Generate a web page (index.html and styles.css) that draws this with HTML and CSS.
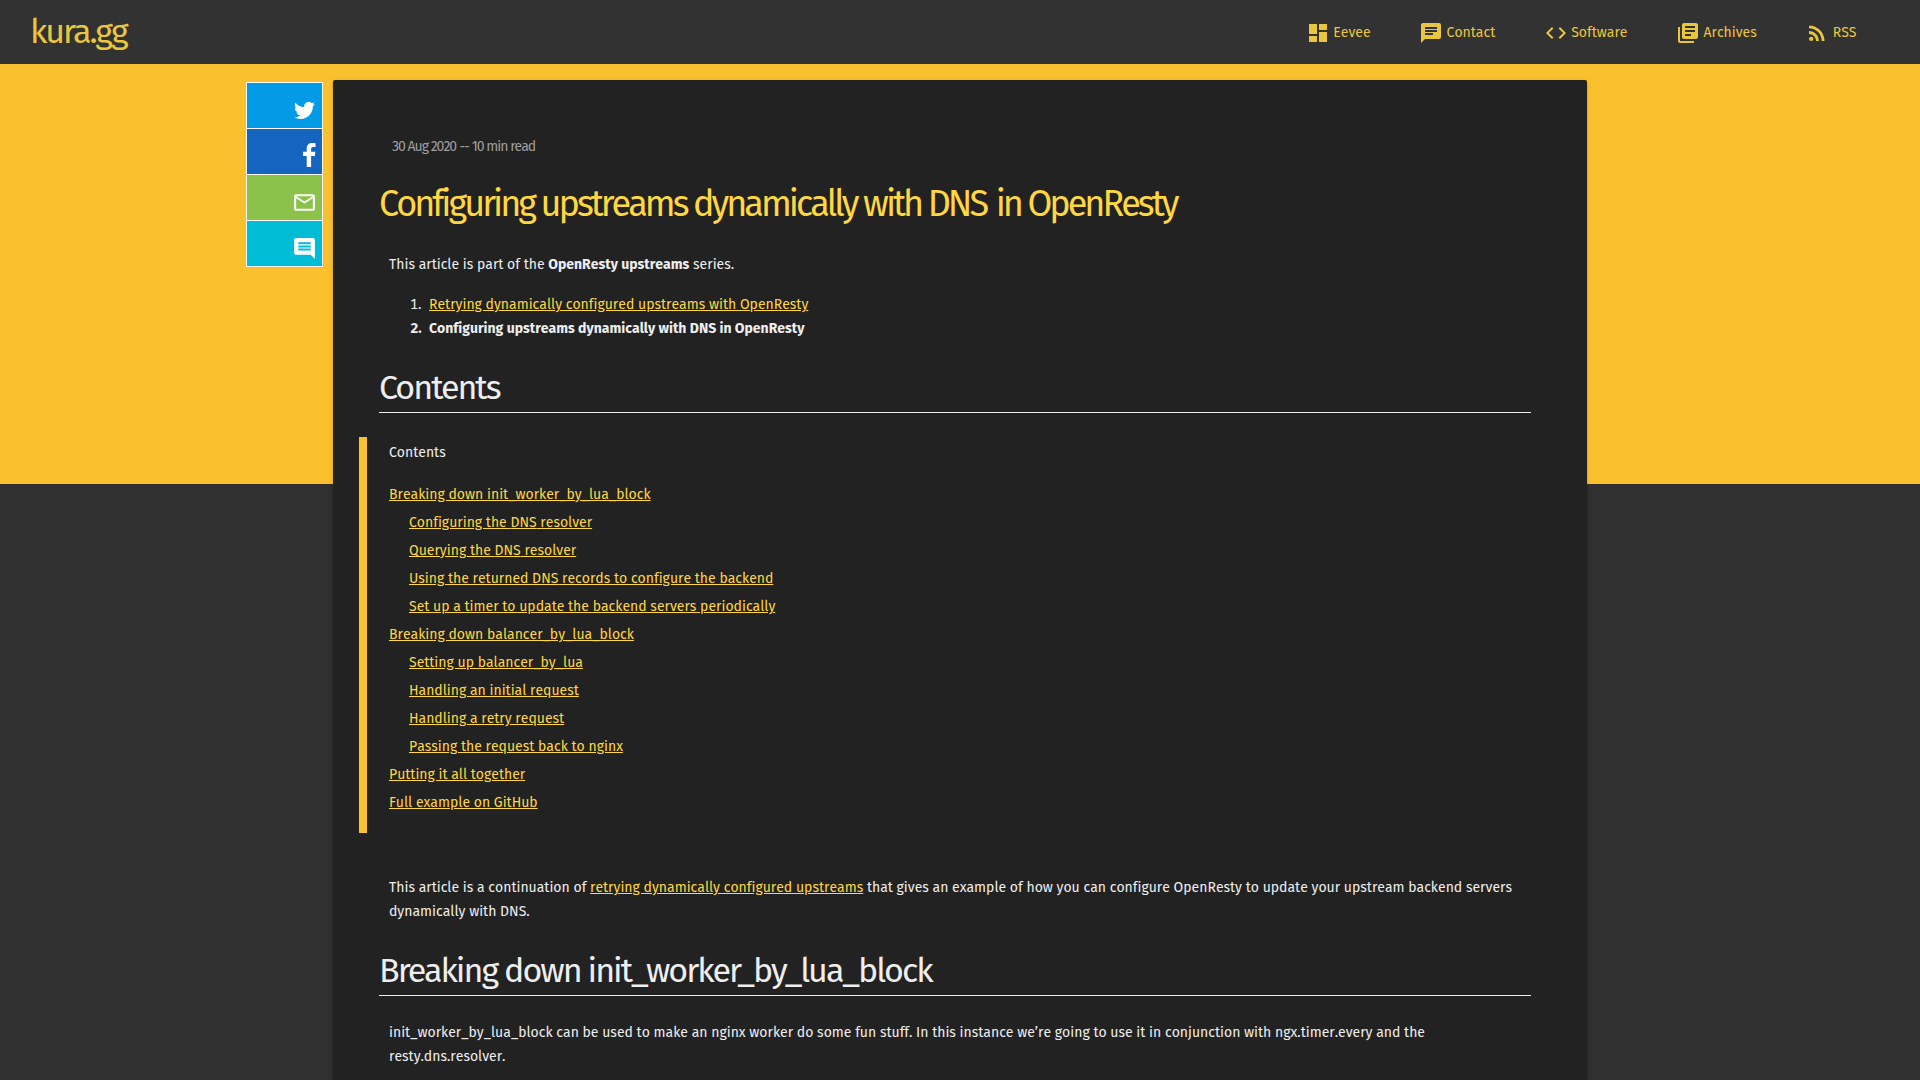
FILE: index.html
```html
<!DOCTYPE html>
<html lang="en">
<head>
<meta charset="utf-8">
<title>Configuring upstreams dynamically with DNS in OpenResty</title>
<link rel="stylesheet" href="styles.css">
</head>
<body>
<header class="site-header">
  <a class="logo" href="#">kura.gg</a>
  <nav class="nav">
    <a href="#"><svg viewBox="0 0 24 24"><path d="M3 13h8V3H3v10zm0 8h8v-6H3v6zm10 0h8V11h-8v10zm0-18v6h8V3h-8z"/></svg>Eevee</a>
    <a href="#"><svg viewBox="0 0 24 24"><path d="M20 2H4c-1.1 0-1.99.9-1.99 2L2 22l4-4h14c1.1 0 2-.9 2-2V4c0-1.100-.9-2-2-2zM6 9h12v2H6V9zm8 5H6v-2h8v2zm4-6H6V6h12v2z"/></svg>Contact</a>
    <a href="#"><svg viewBox="0 0 24 24"><path d="M9.400 16.600L4.800 12l4.600-4.600L8 6l-6 6 6 6 1.400-1.400zm5.200 0l4.600-4.600-4.600-4.600L16 6l6 6-6 6-1.400-1.400z"/></svg>Software</a>
    <a href="#"><svg viewBox="0 0 24 24"><path d="M4 6H2v14c0 1.100.9 2 2 2h14v-2H4V6zm16-4H8c-1.100 0-2 .9-2 2v12c0 1.100.9 2 2 2h12c1.100 0 2-.9 2-2V4c0-1.100-.9-2-2-2zm-1 9H9V9h10v2zm-4 4H9v-2h6v2zm4-8H9V5h10v2z"/></svg>Archives</a>
    <a href="#"><svg viewBox="0 0 24 24"><circle cx="6.180" cy="17.820" r="2.180"/><path d="M4 4.440v2.830c7.030 0 12.730 5.700 12.730 12.730h2.830c0-8.590-6.970-15.560-15.560-15.560zm0 5.660v2.830c3.900 0 7.070 3.170 7.070 7.070h2.830c0-5.470-4.430-9.900-9.900-9.900z"/></svg>RSS</a>
  </nav>
</header>
<div class="page">
  <aside class="share">
    <a class="twitter" href="#" aria-label="Twitter"><svg viewBox="0 0 24 24"><path d="M23.950 4.570a10 10 0 0 1-2.820.77 4.960 4.960 0 0 0 2.160-2.720c-.95.55-2 .95-3.130 1.180a4.920 4.920 0 0 0-8.380 4.480C7.690 8.090 4.070 6.130 1.640 3.160a4.900 4.900 0 0 0-.67 2.480c0 1.710.87 3.210 2.190 4.100a4.900 4.900 0 0 1-2.230-.62v.06a4.920 4.920 0 0 0 3.950 4.830 5 5 0 0 1-2.210.08 4.940 4.940 0 0 0 4.600 3.420A9.870 9.870 0 0 1 0 19.540a14 14 0 0 0 7.550 2.210c9.050 0 14-7.500 14-13.980 0-.21 0-.42-.02-.63a9.940 9.940 0 0 0 2.460-2.550z"/></svg></a>
    <a class="facebook" href="#" aria-label="Facebook"><svg viewBox="0 0 13 24"><path d="M12.500.17v3.810h-2.260c-1.770 0-2.110.85-2.110 2.080v2.730h4.220l-.56 4.270H8.130V24H3.710V13.060H.04V8.790h3.670V5.640C3.710 2 5.940.01 9.200.01c1.560 0 2.900.11 3.300.16z"/></svg></a>
    <a class="mail" href="#" aria-label="Email"><svg viewBox="0 0 24 24"><path d="M20 4H4c-1.100 0-1.990.9-1.990 2L2 18c0 1.100.9 2 2 2h16c1.100 0 2-.9 2-2V6c0-1.100-.9-2-2-2zm0 14H4V8l8 5 8-5v10zm-8-7L4 6h16l-8 5z"/></svg></a>
    <a class="comment" href="#" aria-label="Comment"><svg viewBox="0 0 24 24"><path d="M21.990 4c0-1.100-.89-2-1.990-2H4c-1.100 0-2 .9-2 2v12c0 1.100.9 2 2 2h14l4 4-.01-18zM18 14H6v-2h12v2zm0-3H6V9h12v2zm0-3H6V6h12v2z"/></svg></a>
  </aside>
  <article class="card">
    <div class="meta">30 Aug 2020 <span class="dash">--</span> 10 min read</div>
    <h1>Configuring upstreams dynamically with <span class="caps">DNS</span> in OpenResty</h1>
    <p>This article is part of the <strong>OpenResty upstreams</strong> series.</p>
    <ol class="series">
      <li><a href="#">Retrying dynamically configured upstreams with OpenResty</a></li>
      <li class="current">Configuring upstreams dynamically with DNS in OpenResty</li>
    </ol>
    <h2>Contents</h2>
    <div class="toc">
      <div class="toc-title">Contents</div>
      <ul>
        <li><a href="#">Breaking down <span>init_worker_by_lua_block</span></a>
          <ul>
            <li><a href="#">Configuring the <span>DNS</span> resolver</a></li>
            <li><a href="#">Querying the <span>DNS</span> resolver</a></li>
            <li><a href="#">Using the returned <span>DNS</span> records to configure the backend</a></li>
            <li><a href="#">Set up a timer to update the backend servers periodically</a></li>
          </ul></li>
        <li><a href="#">Breaking down <span>balancer_by_lua_block</span></a>
          <ul>
            <li><a href="#">Setting up balancer_by_lua</a></li>
            <li><a href="#">Handling an initial request</a></li>
            <li><a href="#">Handling a retry request</a></li>
            <li><a href="#">Passing the request back to nginx</a></li>
          </ul></li>
        <li><a href="#">Putting it all together</a></li>
        <li><a href="#">Full example on GitHub</a></li>
      </ul>
    </div>
    <p>This article is a continuation of <a href="#">retrying dynamically configured upstreams</a> that gives an example of how you can configure OpenResty to update your upstream backend servers dynamically with DNS.</p>
    <h2>Breaking down init_worker_by_lua_block</h2>
    <p>init_worker_by_lua_block can be used to make an nginx worker do some fun stuff. In this instance we’re going to use it in conjunction with ngx.timer.every and the resty.dns.resolver.</p>
  </article>
</div>
</body>
</html>
```
FILE: styles.css
```css
* { box-sizing: border-box; }
html { height: 100%; overflow: hidden; }
body {
  margin: 0;
  height: 100%;
  overflow: hidden;
  background: linear-gradient(#fbc02d, #fbc02d) 0 0 / 100% 484px no-repeat #303030;
  color: #eee;
  font: 14px/24px "Fira Sans", "Noto Sans", sans-serif;
  font-kerning: none;
  font-variant-ligatures: none;
}
a { color: #ffd740; }
svg { display: block; fill: currentColor; }
ul, ol { margin: 0; padding: 0; }

.site-header {
  display: flex;
  justify-content: space-between;
  align-items: center;
  height: 64px;
  padding: 0 63.5px 0 30px;
  background: #323232;
}
.site-header a { text-decoration: none; opacity: .9; }
.logo { font-size: 34px; line-height: 64px; letter-spacing: -2px; font-kerning: normal; }
.nav { display: flex; gap: 48.3px; padding-top: 2px; }
.nav a { display: flex; align-items: center; gap: 3.7px; }
.nav svg { width: 24px; height: 24px; }

.page { display: flex; align-items: flex-start; padding: 16px 0 0 246px; }
.share {
  width: 77px;
  margin: 2px 10px 0 0;
  border: 1px solid #fff;
  border-bottom: 0;
}
.share a {
  display: flex;
  justify-content: flex-end;
  height: 46px;
  padding: 15px 5px 0 0;
  border-bottom: 1px solid #fff;
  color: #fff;
}
.share svg { width: 25px; height: 25px; }
.share .twitter { background: #039be5; padding: 16.5px 7px 0 0; }
.share .twitter svg { width: 21px; height: 21px; }
.share .facebook { background: #1565c0; padding: 14px 6px 0 0; }
.share .facebook svg { width: 13px; height: 24px; }
.share .mail { background: #8bc34a; }
.share .comment { background: #00bcd4; }

.card {
  width: 1254px;
  height: 1000px;
  padding: 55px 56px 0 46px;
  background: #222;
  border-radius: 2px 2px 0 0;
  box-shadow: 0 2px 2px rgba(0, 0, 0, .14), 0 3px 1px -2px rgba(0, 0, 0, .2), 0 1px 5px rgba(0, 0, 0, .12);
}
.meta { padding-left: 13px; color: #9e9e9e; letter-spacing: -1px; }
.meta .dash { margin-left: .5px; letter-spacing: -.8px; }
h1 {
  margin: 21px 0 25px;
  color: #ffd740;
  font-size: 36px;
  font-weight: 400;
  line-height: 48px;
  letter-spacing: -3px;
}
h1 .caps { margin-right: 3px; }
p { margin: 0 0 16px 10px; }
.series { padding-left: 46px; }
.series li { padding-left: 4px; }
.series .current { font-weight: 700; }
h2 {
  margin: 23px 0 24px;
  border-bottom: 1px solid #eee;
  font-size: 34px;
  font-weight: 400;
  font-kerning: normal;
  line-height: 48px;
  letter-spacing: -2px;
}
h2 + p { margin-top: 25px; }
.toc {
  height: 396px;
  margin: 0 0 43px -20px;
  padding: 4px 0 0 22px;
  border-left: 8px solid #fbc02d;
}
.toc-title { margin-bottom: 16px; }
.toc ul { list-style: none; line-height: 28px; }
.toc ul ul { padding-left: 20px; }
```
